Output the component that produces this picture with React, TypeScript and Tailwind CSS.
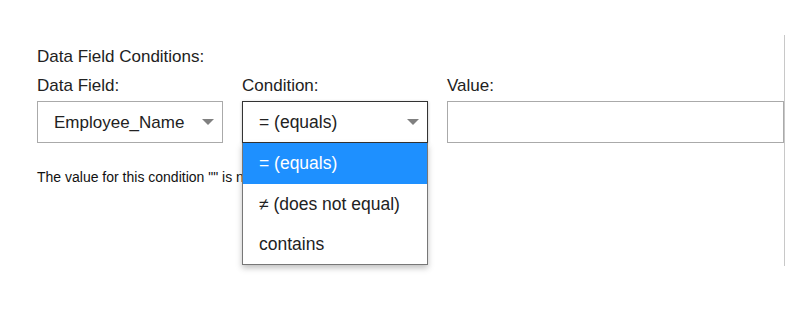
import React from 'react';

const Arrow: React.FC = () => (
  <svg width="12" height="6" viewBox="0 0 12 6" className="shrink-0">
    <path d="M0 0 L12 0 L6 6 Z" fill="#808080" />
  </svg>
);

const options = ['= (equals)', '≠ (does not equal)', 'contains'];

const App: React.FC = () => {
  return (
    <div
      className="w-[785px] h-[323px] bg-white pt-[35px] pl-[37px] text-[#222]"
      style={{ fontFamily: '"Liberation Sans", Arial, sans-serif' }}
    >
      <div className="w-[748px] h-[231px] border-r border-[#c8c8c8] pt-[12px]">
        <div className="text-[17px] leading-[20px]">Data Field Conditions:</div>
        <div className="grid grid-cols-[186px_186px_1fr] gap-x-[19px] mt-[9px]">
          <div>
            <div className="text-[17px] leading-[20px]">Data Field:</div>
            <div className="mt-[5px] h-[42px] border border-[#aaa] flex items-center justify-between pl-[16px] pr-[8px] text-[17px]">
              <span className="pt-[1px]">Employee_Name</span>
              <Arrow />
            </div>
          </div>
          <div className="relative">
            <div className="text-[17px] leading-[20px]">Condition:</div>
            <div className="relative mt-[5px]">
              <div className="h-[42px] border border-[#333] flex items-center justify-between pl-[16px] pr-[8px] text-[17.5px] shadow-[0_1px_3px_rgba(0,0,0,0.25)]">
                <span className="pt-[1px]">= (equals)</span>
                <Arrow />
              </div>
              <div className="absolute left-0 top-full w-full bg-white border border-[#777] border-t-0 shadow-[0_3px_6px_rgba(0,0,0,0.25)] text-[17.5px] z-10">
                {options.map((o, i) => (
                  <div
                    key={o}
                    className={`flex items-center pl-[16px] ${i === 0 ? 'h-[41px] bg-[#1e90ff] text-white' : 'h-[40px]'}`}
                  >
                    {o}
                  </div>
                ))}
              </div>
            </div>
          </div>
          <div>
            <div className="text-[17px] leading-[20px]">Value:</div>
            <div className="mt-[5px] h-[42px] border border-[#aaa]" />
          </div>
        </div>
        <div className="mt-[25px] text-[14px] leading-[18px] text-[#111] whitespace-nowrap">
          The value for this condition "" is not valid.
        </div>
      </div>
    </div>
  );
};

export default App;
